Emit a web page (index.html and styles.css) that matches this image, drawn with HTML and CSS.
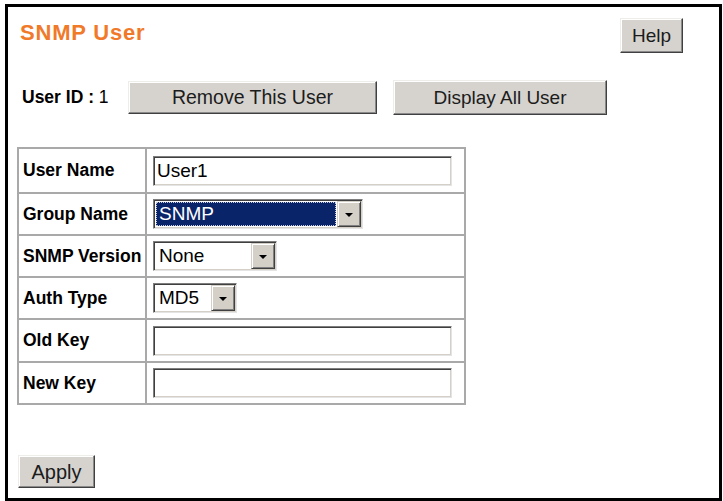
FILE: index.html
```html
<!DOCTYPE html>
<html lang="en">
<head>
<meta charset="utf-8">
<title>SNMP User</title>
<link rel="stylesheet" href="styles.css">
</head>
<body>
<div class="frame">
  <div class="header">
    <h1 class="title">SNMP User</h1>
    <button class="btn btn-help" type="button">Help</button>
  </div>

  <div class="userid-row">
    <span class="userid"><b>User ID :</b> 1</span>
    <button class="btn btn-remove" type="button">Remove This User</button>
    <button class="btn btn-display" type="button">Display All User</button>
  </div>

  <table class="form">
    <tr class="row-first">
      <th>User Name</th>
      <td><input class="text" type="text" value="User1"></td>
    </tr>
    <tr>
      <th>Group Name</th>
      <td>
        <span class="combo combo-group" role="listbox">
          <span class="val val-focus">SNMP</span>
          <span class="arrow"><span class="tri"></span></span>
        </span>
      </td>
    </tr>
    <tr>
      <th>SNMP Version</th>
      <td>
        <span class="combo combo-version" role="listbox">
          <span class="val">None</span>
          <span class="arrow"><span class="tri"></span></span>
        </span>
      </td>
    </tr>
    <tr>
      <th>Auth Type</th>
      <td>
        <span class="combo combo-auth" role="listbox">
          <span class="val">MD5</span>
          <span class="arrow"><span class="tri"></span></span>
        </span>
      </td>
    </tr>
    <tr class="row-old">
      <th>Old Key</th>
      <td><input class="text" type="text" value=""></td>
    </tr>
    <tr>
      <th>New Key</th>
      <td><input class="text" type="text" value=""></td>
    </tr>
  </table>

  <button class="btn btn-apply" type="button">Apply</button>
</div>
</body>
</html>
```

FILE: styles.css
```css
* {
  box-sizing: border-box;
}

html,
body {
  margin: 0;
  padding: 0;
  background: #ffffff;
}

body {
  width: 723px;
  height: 501px;
  overflow: hidden;
  padding: 4px 0 0 5px;
  font-family: "Liberation Sans", Arial, sans-serif;
  color: #000000;
}

.frame {
  width: 717px;
  height: 497px;
  border: 3px solid #000000;
  display: flex;
  flex-direction: column;
  align-items: flex-start;
}

/* header */
.header {
  align-self: stretch;
  display: flex;
  justify-content: space-between;
  align-items: flex-start;
  margin-top: 11px;
  padding: 0 36px 0 12px;
}

.title {
  margin: 2px 0 0;
  font-size: 22px;
  line-height: 25px;
  font-weight: bold;
  letter-spacing: 0.8px;
  color: #f07a29;
}

/* buttons */
.btn {
  display: inline-flex;
  align-items: center;
  justify-content: center;
  padding: 0;
  font-family: "Liberation Sans", Arial, sans-serif;
  font-size: 19px;
  line-height: 1;
  color: #1c1c1c;
  background: #d6d3ce;
  border: 1px solid;
  border-color: #eeede9 #404040 #404040 #eeede9;
  box-shadow: inset -1px -1px 0 #8a8a8a, inset 1px 1px 0 #ffffff;
}

.btn-help {
  width: 63px;
  height: 35px;
}

.userid-row {
  display: flex;
  align-items: center;
  margin-top: 27px;
  padding-left: 14px;
  height: 35px;
}

.userid {
  width: 106px;
  font-size: 17.5px;
}

.btn-remove {
  width: 249px;
  height: 33px;
  font-size: 19.5px;
}

.btn-display {
  margin-left: 16px;
  width: 214px;
  height: 35px;
}

/* form table */
.form {
  margin: 32px 0 0 9px;
  border-collapse: separate;
  border-spacing: 0;
  border-top: 2px solid #a9a9a9;
  border-left: 2px solid #a9a9a9;
  table-layout: fixed;
  width: 449px;
}

.form tr {
  height: 42px;
}

.form tr.row-first {
  height: 45px;
}

.form tr.row-old {
  height: 43px;
}

.form th,
.form td {
  border-right: 2px solid #a9a9a9;
  border-bottom: 2px solid #a9a9a9;
  vertical-align: middle;
}

.form th {
  width: 128px;
  padding: 0 0 0 4px;
  text-align: left;
  font-size: 17.5px;
  font-weight: bold;
  white-space: nowrap;
}

.form td {
  width: 319px;
  padding: 0 0 0 6px;
}

.text {
  display: block;
  width: 299px;
  height: 30px;
  margin: 0;
  padding: 0 3px;
  font-family: "Liberation Sans", Arial, sans-serif;
  font-size: 19px;
  color: #000000;
  background: #ffffff;
  border: 1px solid;
  border-color: #7e7e7e #e4e4e4 #e4e4e4 #7e7e7e;
  box-shadow: inset 1px 1px 0 #404040, inset -1px -1px 0 #d4d0c8;
  outline: none;
}

/* combo boxes */
.combo {
  display: flex;
  height: 30px;
  background: #ffffff;
  border: 1px solid;
  border-color: #7e7e7e #e4e4e4 #e4e4e4 #7e7e7e;
  box-shadow: inset 1px 1px 0 #404040, inset -1px -1px 0 #d4d0c8;
  padding: 1px;
}

.combo-group {
  width: 210px;
}

.combo-version {
  width: 124px;
}

.combo-auth {
  width: 84px;
}

.val {
  flex: 1;
  display: flex;
  align-items: center;
  padding-left: 4px;
  font-size: 19px;
  color: #000000;
  white-space: nowrap;
}

.val-focus {
  margin: 1px;
  padding-left: 2px;
  background: #0a246a;
  color: #ffffff;
  border: 1px dotted #c8ccd8;
}

.arrow {
  width: 24px;
  display: flex;
  align-items: center;
  justify-content: center;
  background: #d4d0c8;
  border: 1px solid;
  border-color: #d4d0c8 #404040 #404040 #d4d0c8;
  box-shadow: inset 1px 1px 0 #ffffff, inset -1px -1px 0 #808080;
}

.tri {
  width: 0;
  height: 0;
  border-left: 4px solid transparent;
  border-right: 4px solid transparent;
  border-top: 4px solid #000000;
  margin-top: 1px;
}

/* apply */
.btn-apply {
  margin: 50px 0 0 10px;
  width: 77px;
  height: 33px;
  font-size: 20px;
}
```
